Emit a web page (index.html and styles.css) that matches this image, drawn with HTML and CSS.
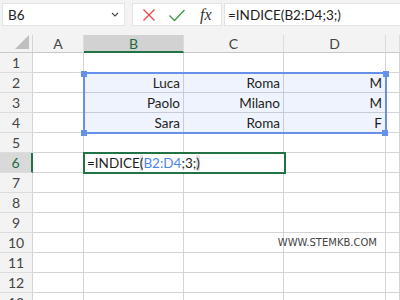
FILE: index.html
```html
<!DOCTYPE html>
<html>
<head>
<meta charset="utf-8">
<link rel="stylesheet" href="styles.css">
</head>
<body>
<div class="app">
  <div class="topbar">
    <div class="namebox">
      <span class="name">B6</span>
      <svg class="chev" width="8" height="5" viewBox="0 0 8 5"><path d="M1 1 L4 4 L7 1" fill="none" stroke="#444" stroke-width="1.1"/></svg>
    </div>
    <div class="tools">
      <svg class="ico" width="14" height="14" viewBox="0 0 14 14"><path d="M1.5 1.5 L12.5 12.5 M12.5 1.5 L1.5 12.5" stroke="#e5484d" stroke-width="1.3" fill="none"/></svg>
      <svg class="ico" width="18" height="14" viewBox="0 0 18 14"><path d="M1.5 7.5 L6.5 12.5 L16.5 2" stroke="#3a9a4a" stroke-width="1.3" fill="none"/></svg>
      <span class="fx">fx</span>
    </div>
    <div class="formula">=INDICE(B2:D4;3;)</div>
  </div>
  <div class="sheet">
    <div class="corner"><svg width="16" height="16" viewBox="0 0 16 16"><path d="M15 1 L15 15 L1 15 Z" fill="#bfbfbf"/></svg></div>
    <div class="ch">A</div>
    <div class="ch active">B</div>
    <div class="ch">C</div>
    <div class="ch">D</div>
    <div class="ch"></div>

    <div class="rh">1</div><div class="c"></div><div class="c"></div><div class="c"></div><div class="c"></div><div class="c"></div>
    <div class="rh">2</div><div class="c"></div><div class="c sel">Luca</div><div class="c sel">Roma</div><div class="c sel">M</div><div class="c"></div>
    <div class="rh">3</div><div class="c"></div><div class="c sel">Paolo</div><div class="c sel">Milano</div><div class="c sel">M</div><div class="c"></div>
    <div class="rh">4</div><div class="c"></div><div class="c sel">Sara</div><div class="c sel">Roma</div><div class="c sel">F</div><div class="c"></div>
    <div class="rh">5</div><div class="c"></div><div class="c"></div><div class="c"></div><div class="c"></div><div class="c"></div>
    <div class="rh active">6</div><div class="c"></div><div class="c"></div><div class="c"></div><div class="c"></div><div class="c"></div>
    <div class="rh">7</div><div class="c"></div><div class="c"></div><div class="c"></div><div class="c"></div><div class="c"></div>
    <div class="rh">8</div><div class="c"></div><div class="c"></div><div class="c"></div><div class="c"></div><div class="c"></div>
    <div class="rh">9</div><div class="c"></div><div class="c"></div><div class="c"></div><div class="c"></div><div class="c"></div>
    <div class="rh">10</div><div class="c"></div><div class="c"></div><div class="c"></div><div class="c wm"><span>WWW.STEMKB.COM</span></div><div class="c"></div>
    <div class="rh">11</div><div class="c"></div><div class="c"></div><div class="c"></div><div class="c"></div><div class="c"></div>
    <div class="rh">12</div><div class="c"></div><div class="c"></div><div class="c"></div><div class="c"></div><div class="c"></div>
    <div class="rh">13</div><div class="c"></div><div class="c"></div><div class="c"></div><div class="c"></div><div class="c"></div>

    <div class="range">
      <span class="hd tl"></span><span class="hd bl"></span><span class="hd tr"></span><span class="hd br"></span>
    </div>
    <div class="editor">=INDICE<span class="par">(</span><span class="ref">B2:D4</span>;3;<span class="par">)</span></div>
  </div>
</div>
</body>
</html>
```
FILE: styles.css
```css
html, body {
  margin: 0;
  padding: 0;
  background: #ffffff;
}
body {
  width: 400px;
  height: 300px;
  overflow: hidden;
  font-family: Lato, "Liberation Sans", sans-serif;
  font-size: 13.5px;
  color: #1e1e1e;
}
.app {
  width: 400px;
  height: 300px;
  overflow: hidden;
}
.topbar {
  height: 35px;
  box-sizing: border-box;
  background: #f3f3f3;
  display: flex;
  align-items: flex-start;
  padding: 3px 0 0 2px;
}
.namebox {
  width: 123px;
  height: 23px;
  box-sizing: border-box;
  background: #fff;
  border: 1px solid #e3e3e3;
  display: flex;
  align-items: center;
  justify-content: space-between;
  padding: 0 5px 0 5px;
  font-size: 13.5px;
  color: #222;
}
.tools {
  margin-left: 7px;
  width: 90px;
  height: 23px;
  box-sizing: border-box;
  background: #fff;
  border: 1px solid #e3e3e3;
  display: flex;
  align-items: center;
  padding-left: 9px;
  gap: 12px;
}
.fx {
  font-family: "Liberation Serif", serif;
  font-style: italic;
  font-size: 16px;
  color: #333;
  margin-left: 2px;
}
.formula {
  margin-left: 2px;
  flex: 1;
  height: 23px;
  box-sizing: border-box;
  background: #fff;
  border: 1px solid #e3e3e3;
  border-right: none;
  display: flex;
  align-items: center;
  padding-left: 3px;
  color: #222;
}
.sheet {
  position: relative;
  display: grid;
  grid-template-columns: 33px 51px 100px 100px 102px 1fr;
  grid-template-rows: 18px;
  grid-auto-rows: 20px;
}
.corner {
  background: #f3f3f3;
  border-right: 1px solid #d4d4d4;
  border-bottom: 1px solid #c8c8c8;
  box-sizing: border-box;
  display: flex;
  align-items: flex-end;
  justify-content: flex-end;
  padding: 0 2px 2px 0;
}
.ch {
  background: #f3f3f3;
  border-right: 1px solid #dcdcdc;
  border-bottom: 1px solid #c8c8c8;
  box-sizing: border-box;
  display: flex;
  align-items: center;
  justify-content: center;
  color: #444;
  font-size: 14px;
}
.ch.active {
  background: #d2d2d2;
  color: #1e6b3f;
  border-bottom: 2px solid #217346;
}
.rh {
  background: #f3f3f3;
  border-right: 1px solid #d4d4d4;
  border-bottom: 1px solid #dcdcdc;
  box-sizing: border-box;
  display: flex;
  align-items: center;
  justify-content: center;
  color: #444;
  font-size: 14px;
}
.rh.active {
  background: #d9d9d9;
  color: #1e6b3f;
  border-right: 2px solid #217346;
}
.c {
  border-right: 1px solid #d4d4d4;
  border-bottom: 1px solid #d4d4d4;
  box-sizing: border-box;
  display: flex;
  align-items: center;
  justify-content: flex-end;
  padding-right: 3px;
  white-space: nowrap;
}
.c.sel {
  background: #eef3fd;
  border-right-color: #c6cbd6;
  border-bottom-color: #c6cbd6;
}
.c.wm {
  padding-right: 8px;
}
.wm span {
  font-family: "DejaVu Sans", sans-serif;
  font-size: 10px;
  color: #444;
}
.range {
  position: absolute;
  left: 83px;
  top: 37px;
  width: 304px;
  height: 62px;
  box-sizing: border-box;
  border: 2px solid #6592e8;
}
.hd {
  position: absolute;
  width: 6px;
  height: 6px;
  background: #6592e8;
}
.hd.tl { left: -4px; top: -3px; }
.hd.bl { left: -4px; bottom: -4px; }
.hd.tr { right: -4px; top: -3px; }
.hd.br { right: -3px; bottom: -4px; }
.editor {
  position: absolute;
  left: 83px;
  top: 117px;
  width: 203px;
  height: 22px;
  box-sizing: border-box;
  border: 2px solid #217346;
  background: #fff;
  display: flex;
  align-items: center;
  padding-left: 2px;
  white-space: nowrap;
}
.ref { color: #4a86e8; }
.par { background: #e4e4e4; }
```
